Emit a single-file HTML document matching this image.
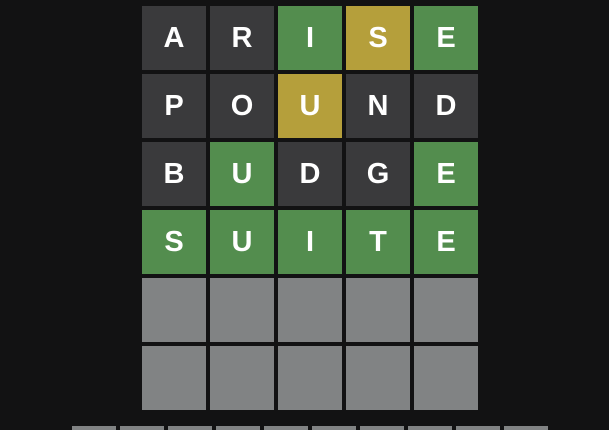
<!DOCTYPE html><html><head><style>
html,body{margin:0;background:#121213;width:609px;height:430px;overflow:hidden}
body{position:relative;font-family:"Liberation Sans",sans-serif}
.t{position:absolute;width:64px;height:64px;color:#fff;font-weight:bold;font-size:29px;display:flex;align-items:center;justify-content:center;padding-top:1px;box-sizing:border-box}
.d{background:#3a3a3c}.g{background:#538d4e}.y{background:#b59f3b}.e{background:#818384}
.k{position:absolute;top:426px;width:44px;height:4px;background:#818384}
</style></head><body>
<script>
var rows=[["A d","R d","I g","S y","E g"],["P d","O d","U y","N d","D d"],["B d","U g","D d","G d","E g"],["S g","U g","I g","T g","E g"],[" e"," e"," e"," e"," e"],[" e"," e"," e"," e"," e"]];
var h="";rows.forEach(function(r,i){r.forEach(function(c,j){var p=c.split(" ");h+='<div class="t '+p[1]+'" style="left:'+(142+68*j)+'px;top:'+(6+68*i)+'px">'+p[0]+'</div>';});});
for(var k=0;k<10;k++)h+='<div class="k" style="left:'+(72+48*k)+'px"></div>';
document.write(h);
</script>
</body></html>
